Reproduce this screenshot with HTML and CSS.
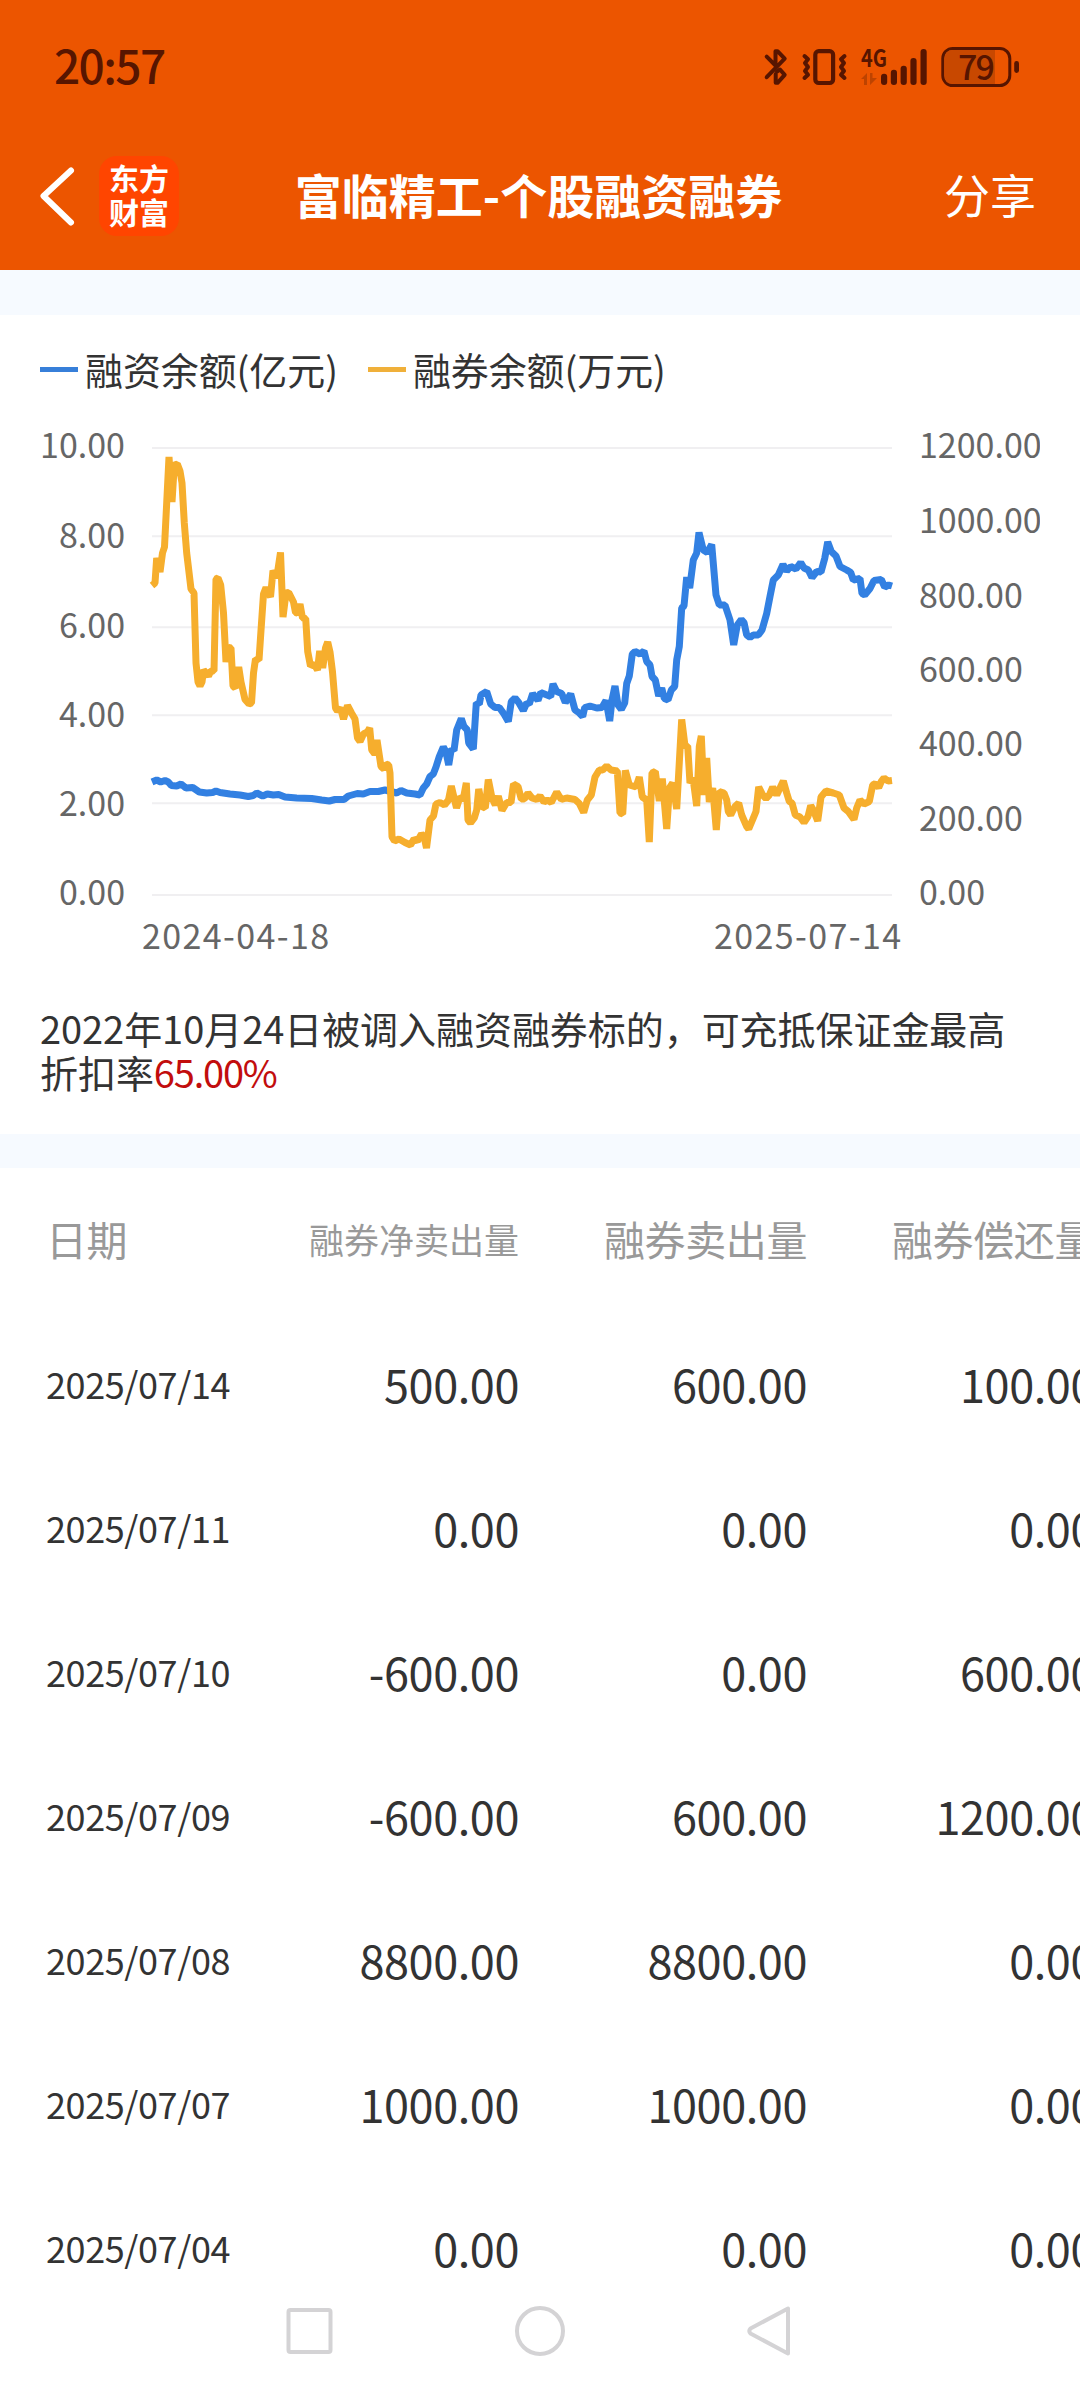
FILE: index.html
```html
<!DOCTYPE html>
<html lang="zh-CN">

<head>
    <meta charset="UTF-8">
    <title>富临精工-个股融资融券</title>
    <link rel="stylesheet" href="styles.css">
</head>

<body>
    <div class="screen">
        <header class="header">
            <div class="status-bar">
                <span class="time">20:57</span>
                <!-- bluetooth, vibrate, signal, battery -->
                <svg class="status-icons" width="260" height="50" viewBox="763 42 260 50">
                    <g class="ink-line">
                        <path stroke-width="4" d="M768.7 56.7L777.5 65.5V51.2H779.5L786.7 58.7L768.7 77.2" />
                        <path stroke-width="4" d="M779 71.5L782 69.5L786.7 74.8L779.5 82.8H777.7V74" />
                        <rect stroke-width="4.2" x="817.3" y="51.2" width="17.8" height="31.8" rx="3.5" />
                        <path stroke-width="4" d="M806.5 56L810 59.3L807 63L810 67L807 71L810 74.7L806.5 78" />
                        <path stroke-width="4" d="M846.5 56L843 59.3L846 63L843 67L846 71L843 74.7L846.5 78" />
                        <rect stroke-width="3" x="944.8" y="48.5" width="67" height="37" rx="10" />
                    </g>
                    <text class="network" x="863" y="67" textLength="26" lengthAdjust="spacingAndGlyphs">4G</text>
                    <path class="arrows" d="M863 79L869 73V85H866V79ZM872 73H874.5V78H879L872 85Z" />
                    <g class="ink">
                        <rect x="883" y="73.7" width="6.2" height="11.3" rx="3" />
                        <rect x="892.8" y="69.7" width="6.2" height="15.3" rx="3" />
                        <rect x="902.6" y="65.7" width="6.2" height="19.3" rx="3" />
                        <rect x="912.4" y="58" width="6.2" height="27" rx="3" />
                        <rect x="922.5" y="49" width="6.2" height="36" rx="3" />
                        <rect x="1016.2" y="61" width="4.8" height="12" rx="2.4" />
                    </g>
                    <path class="charge" d="M997 50V84H955Q946.3 84 946.3 75V59Q946.3 50 955 50Z" />
                    <text class="percent" x="960" y="80" textLength="37">79</text>
                </svg>
            </div>
            <div class="nav">
                <svg class="back" width="40" height="64" viewBox="0 0 40 64">
                    <path d="M34 6.5L6.5 32L34 58.5" />
                </svg>
                <div class="logo">东方<br>财富</div>
                <h1 class="title">富临精工-个股融资融券</h1>
                <span class="share">分享</span>
            </div>
        </header>

        <main class="content">
            <div class="strip"><div class="code">300432</div></div>

            <section class="chart-card">
                <div class="legend">
                    <span class="legend-item"><i class="mark blue"></i>融资余额(亿元)</span>
                    <span class="legend-item"><i class="mark yellow"></i>融券余额(万元)</span>
                </div>
                <svg class="chart" width="1000" height="560" viewBox="40 410 1000 560">
                    <path class="grid" d="M152 448H892M152 536.2H892M152 627.3H892M152 715.3H892M152 803.3H892M152 895H892" />
                    <g class="axis left">
                        <text x="125" y="458">10.00</text>
                        <text x="125" y="548">8.00</text>
                        <text x="125" y="638">6.00</text>
                        <text x="125" y="727">4.00</text>
                        <text x="125" y="815.5">2.00</text>
                        <text x="125" y="905">0.00</text>
                    </g>
                    <g class="axis">
                        <text x="919" y="458">1200.00</text>
                        <text x="919" y="533">1000.00</text>
                        <text x="919" y="607.5">800.00</text>
                        <text x="919" y="682">600.00</text>
                        <text x="919" y="756">400.00</text>
                        <text x="919" y="831">200.00</text>
                        <text x="919" y="905">0.00</text>
                        <text x="142" y="949" textLength="187">2024-04-18</text>
                        <text x="714" y="949" textLength="187">2025-07-14</text>
                    </g>
                    <polyline class="line line-blue" points="152,782 156.7,780 160.7,782 165,780.5 168.3,782 171.3,785.5 176.7,786 181,784 186,788 192.7,787.5 199.3,792 206.7,793 212.7,792.5 216,791 220,792.5 230,794 240,795 248.3,796.5 253.3,795.5 256.7,793 262.7,796 267.3,794 273.3,795 278.7,794.5 285,797 296.7,798 311.7,798.5 321.7,800 329.3,801 335,799.5 344,799.5 348.3,796 357.3,793.5 363.3,794 370,791.5 378.3,791.5 385,790 396.7,793 401,790.5 406.7,793 415,794 420,795 423.3,788 426.7,784 430,776.5 433.3,774 436,767 439.3,756.5 443.3,747 446,752 448.7,765 451.3,749 454,750.5 456.7,730 461.3,718.5 464,726.5 467.3,730 468.7,743 473.3,749 476.3,703 479.3,704 481,695 486.7,691.5 490.7,704 495,707.5 499.3,707.5 504,714 508.3,721.5 511.3,701.5 515,698 518.7,702.5 523.3,710.5 526.7,703 529.3,704 532.7,693.5 538,700.5 540.7,692.5 545.7,694.5 550.7,696.5 553,684 556.7,691.5 561.7,693.5 565.3,702.5 570.7,694 575,710 579.3,713 582.7,716.5 584.7,707.5 590,706 596.7,708 602,707.5 606,700.5 609.7,721 612,700 615,686 618,705 621.3,709.5 624.7,703 626.7,683.5 629.3,676 632.3,654 635,651.5 640,654 644,651 646.7,661.5 650,665 652,676.5 655.3,680 658.7,696 661.7,688 664.3,698.5 668,700 671.3,690 674.7,686.5 676.7,660 679.3,646.5 681.7,608 684,606 686.7,577 689.7,588 693.3,560 696.7,553 699,532.5 703.3,550 707.3,552.5 711.7,544.5 716,595 719.3,605 725,605 730,620 733.7,645 737.3,625 741.3,619.5 744,622.5 746.7,635 750,637.5 753.3,635 758.3,635 762,630 766.7,613.5 770,596.5 773.3,580 778.3,575 783,564.5 786.7,571 790.7,566.5 796,569 800.7,562.5 804,568 808.3,570 812,577.5 816.7,571.5 821,572 824.7,558.5 827.7,542 831.3,551.5 836,556 840,566.5 846.7,570 850.7,572.5 853.3,580 860,578.5 862,593.5 864.7,595 870,588.5 874,580.5 881.3,579.5 884.7,587 888.7,585 892,586" />
                    <polyline class="line line-yellow" points="152,585.5 155,583 156.7,558 160,572 162.5,553 164.5,547 166.7,503 169,457 172,502 174.3,465 177.3,464 180,471 182,483 184.3,523 186.7,553 191,589 194,593 196,663 198,682 200,686 202,682 203.5,670 206,673 208.5,676 210.7,671 214,671 216,579 218,578 220.7,585 223.5,613 226,662 228.5,647.5 231,648 233,686 235.3,688 238.7,667 241,682 245,699.5 249,704 251.5,703 253.5,673 255.5,659 259,660 261.5,623 263.5,594 266,587.5 270.5,597 273,570.5 276.7,578 280.5,552.5 283,617 286,593 288.7,592.5 293.5,602 295.5,612.5 297.5,613 300,604 302.5,618 305.7,618.5 307.7,651.5 310.5,666 314,664 317.5,670 319.7,651 322.7,668 325.5,648 327.7,642 330,652 332.5,672 335.5,708 337.5,711 340.5,708 343.5,719 347.5,705.5 351.5,713 355,719 357.5,738 360,741.5 363.5,734 367.5,732 369.7,728 371.7,750 374.7,754 377,740 381,766.5 384,769 386,764 388.7,765 390,773 392,837 394.5,841 399,839 405,842.5 410.5,845 414,839 417.5,841 421.5,834 424,836.5 426.5,848 430,820 433.5,816 436,804 440,802.5 444.5,805 448.5,800 451.3,786 456.5,808 460,797 463.3,799 466.3,783 468,820 470.5,823 474.3,818 476.7,810 478.7,789 482,806.5 485.3,808 488.3,779.5 492,798 495.3,805 498.3,796 502,810.5 506.7,802.5 511,802.5 513.5,784 518,786.5 521.3,799 524.3,799 528,793 532,798 536.7,799.5 540,796 544,802 547.3,800 551.3,802.5 556.7,792 561.3,799.5 566.7,798 575,799.5 579.3,803.5 583.7,812.5 587.3,800 591.3,795 595,777 599.3,770 602.7,770 606.7,766 611,770 617.3,771 620,813 622.7,814 625.3,770.5 629.3,785 636,787 639.3,777 642.3,797 646.7,800 649.3,842 652,773 655.3,771.5 659.3,801 662.3,778.5 666.7,829 669.5,788 672.7,783 676.7,809 681.7,719.5 685,746 687.7,746 690,783 693,778 696.7,806 699.3,746.5 701.3,736 704,795 706.7,758 709.3,802 712.7,788 716.3,830 719.3,791.5 724,793 726.7,800 728.3,811.5 730.7,815 735,806.5 738.7,803 741.7,815 746.7,826.5 748.7,829 752.7,819.5 756,811.5 758.7,787 762.7,795 766,798.5 769.3,795 772.7,787 776.7,795 783.3,781 786.7,793 789.3,801.5 792,803 795.3,815 800,817 804,822.5 808,816.5 810.7,805.5 813.3,810 817.7,821 821,797 826,791 833.3,793 839.3,795 844,808 848.3,811.5 854,819.5 856.7,808 860,800 864,804 869.3,801.5 872.7,785 875.3,783.5 878.7,787.5 881.3,781.5 884,778 888,781 892,780.5" />
                </svg>
                <p class="note">2022年10月24日被调入融资融券标的，可充抵保证金最高折扣率<span class="rate">65.00%</span></p>
            </section>

            <div class="strip small"></div>

            <section class="table">
                <div class="row head">
                    <span>日期</span><span class="long">融券净卖出量</span><span>融券卖出量</span><span>融券偿还量</span>
                </div>
                <div class="row">
                    <span class="date">2025/07/14</span><span>500.00</span><span>600.00</span><span>100.00</span>
                </div>
                <div class="row">
                    <span class="date">2025/07/11</span><span>0.00</span><span>0.00</span><span>0.00</span>
                </div>
                <div class="row">
                    <span class="date">2025/07/10</span><span>-600.00</span><span>0.00</span><span>600.00</span>
                </div>
                <div class="row">
                    <span class="date">2025/07/09</span><span>-600.00</span><span>600.00</span><span>1200.00</span>
                </div>
                <div class="row">
                    <span class="date">2025/07/08</span><span>8800.00</span><span>8800.00</span><span>0.00</span>
                </div>
                <div class="row">
                    <span class="date">2025/07/07</span><span>1000.00</span><span>1000.00</span><span>0.00</span>
                </div>
                <div class="row">
                    <span class="date">2025/07/04</span><span>0.00</span><span>0.00</span><span>0.00</span>
                </div>
            </section>
        </main>

        <footer class="system-nav">
            <svg width="54" height="54" viewBox="0 0 54 54"><rect x="6.5" y="6" width="42" height="42" rx="2" /></svg>
            <svg width="54" height="54" viewBox="0 0 54 54"><circle cx="27" cy="27" r="23" /></svg>
            <svg width="54" height="54" viewBox="0 0 54 54"><path d="M44 4.5V49.5L6.5 29.5Q4 27 6.5 24.5Z" /></svg>
        </footer>
    </div>
</body>

</html>
```
FILE: styles.css
```css
body {
    margin: 0;
    background: #fff;
    color: #333;
    font-family: "Noto Sans CJK SC", sans-serif;
}

.screen {
    display: flex;
    flex-direction: column;
    width: 1080px;
    height: 2388px;
    overflow: hidden;
}

/* header */
.header {
    flex: none;
    height: 270px;
    background: #ec5500;
    color: #fff;
}

.status-bar {
    display: flex;
    justify-content: space-between;
    align-items: center;
    height: 134px;
    padding: 0 59px 0 54px;
    box-sizing: border-box;
}

.time {
    color: #571500;
    font-size: 46px;
    font-weight: 500;
    line-height: 60px;
    letter-spacing: -1.6px;
    margin-bottom: 6px;
}

.ink-line {
    fill: none;
    stroke: #571500;
    stroke-linecap: round;
    stroke-linejoin: round;
}

.ink,
.network,
.percent {
    fill: #571500;
}

.network {
    font-size: 24px;
    font-weight: 700;
}

.percent {
    font-size: 34px;
    font-weight: 500;
}

.arrows {
    fill: #bd4300;
}

.charge {
    fill: #c84800;
}

.nav {
    display: flex;
    align-items: center;
    height: 124px;
    padding: 0 44px 0 37px;
}

.back {
    fill: none;
    stroke: #fff;
    stroke-width: 6;
    stroke-linecap: round;
    stroke-linejoin: round;
}

.logo {
    width: 80px;
    height: 80px;
    margin-left: 22px;
    padding-top: 4px;
    box-sizing: border-box;
    border-radius: 18px;
    background: #ff4500;
    font-size: 30px;
    font-weight: 700;
    line-height: 34px;
    text-align: center;
}

.title {
    flex: 1;
    margin: 0 0 5px;
    padding-right: 46px;
    font-size: 47px;
    font-weight: 700;
    line-height: 70px;
    text-align: center;
    white-space: nowrap;
}

.share {
    font-size: 46px;
    line-height: 70px;
    margin-bottom: 6px;
}

/* scrolled page */
.content {
    flex: 1;
    min-height: 0;
    overflow: hidden;
}

.strip {
    height: 45px;
    background: #f6faff;
    overflow: hidden;
}

.strip.small {
    height: 34px;
}

.code {
    margin-top: -40px;
    padding-left: 43px;
    color: #c98a72;
    font-size: 35px;
    line-height: 50px;
}

.chart-card {
    height: 819px;
    padding: 0 40px;
    box-sizing: border-box;
}

.legend {
    display: flex;
    gap: 30px;
    height: 95px;
    padding-top: 28px;
    box-sizing: border-box;
    font-size: 38px;
    line-height: 52px;
    letter-spacing: -0.1px;
}

.legend-item {
    display: flex;
    align-items: flex-start;
}

.mark {
    width: 38px;
    height: 5px;
    margin: 24px 7px 0 0;
}

.blue {
    background: #377fd9;
}

.yellow {
    background: #f0b03a;
}

.chart {
    display: block;
}

.grid {
    stroke: #f0eff1;
    stroke-width: 2;
}

.axis {
    fill: #666;
    font-size: 34px;
}

.left {
    text-anchor: end;
}

.line {
    fill: none;
    stroke-width: 7;
    stroke-linejoin: bevel;
}

.line-blue {
    stroke: #3280e2;
}

.line-yellow {
    stroke: #f6ae2d;
}

.note {
    margin: 36px 0 0;
    font-size: 38px;
    line-height: 44px;
    letter-spacing: -0.05px;
}

.rate {
    color: #c20d0d;
    letter-spacing: -1.2px;
}

/* table */
.row {
    display: grid;
    grid-template-columns: 186px 287px 288px 288px;
    align-items: center;
    height: 144px;
    padding: 0 0 6px 46px;
    box-sizing: border-box;
    font-size: 45px;
    letter-spacing: -0.4px;
    text-align: right;
    white-space: nowrap;
}

.row span:first-child {
    text-align: left;
}

.row .date {
    font-size: 36px;
}

.row.head {
    height: 146px;
    color: #999;
    font-size: 41px;
}

.row.head .long {
    font-size: 35px;
    letter-spacing: 0;
}

/* android buttons */
.system-nav {
    flex: none;
    display: flex;
    justify-content: center;
    align-items: center;
    gap: 177px;
    height: 114px;
}

.system-nav svg {
    fill: none;
    stroke: #d4d3d5;
    stroke-width: 4;
    stroke-linejoin: round;
}
```
